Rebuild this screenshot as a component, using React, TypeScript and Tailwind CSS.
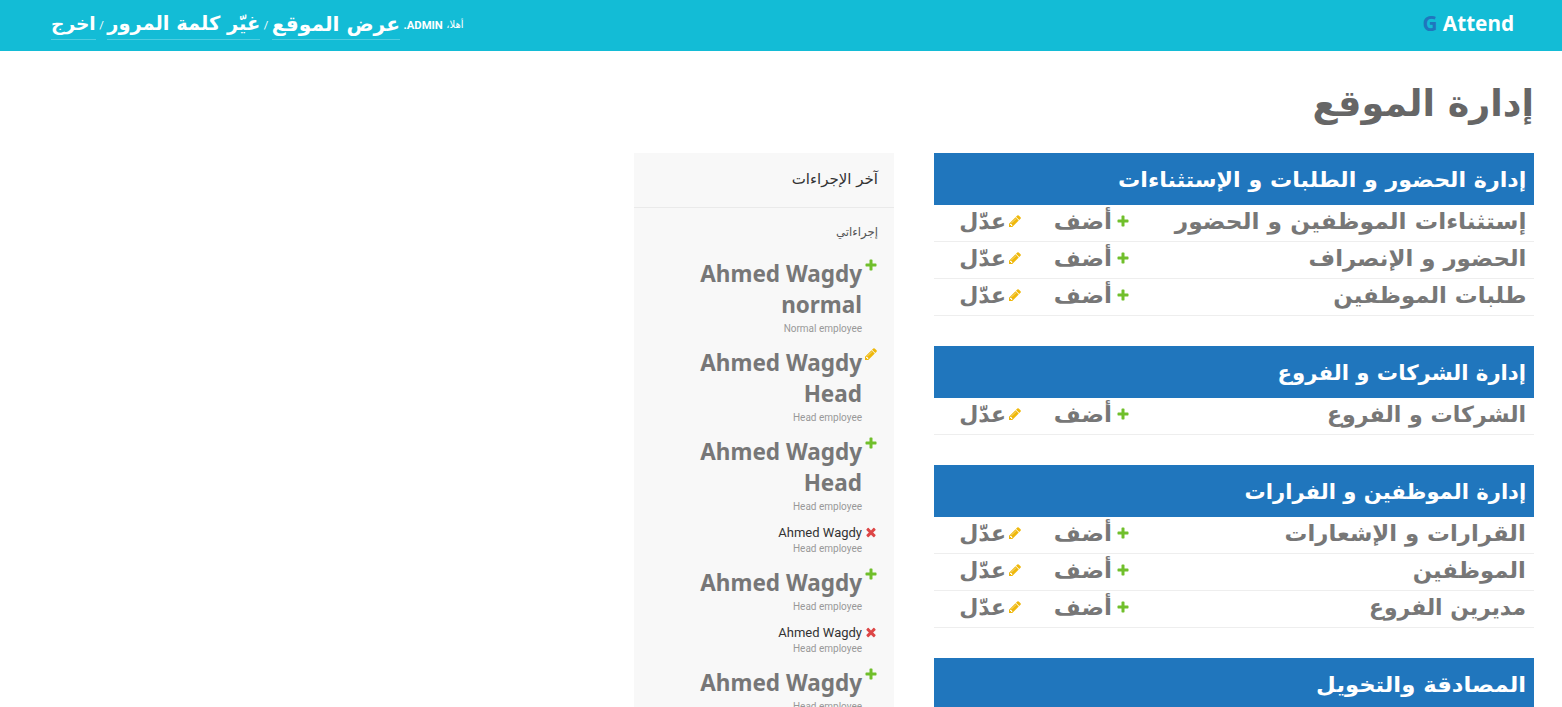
import React from "react";

type Action = "add" | "change" | "delete";

const ICON_PATHS: Record<Action, string> = {
  add: "M1600 796v192q0 40-28 68t-68 28h-416v416q0 40-28 68t-68 28h-192q-40 0-68-28t-28-68v-416h-416q-40 0-68-28t-28-68v-192q0-40 28-68t68-28h416v-416q0-40 28-68t68-28h192q40 0 68 28t28 68v416h416q40 0 68 28t28 68z",
  change:
    "M491 1536l91-91-235-235-91 91v107h128v128h107zm523-928q0-22-22-22-10 0-17 7l-542 542q-7 7-7 17 0 22 22 22 10 0 17-7l542-542q7-7 7-17zm-54-192l416 416-832 832h-416v-416zm683 96q0 53-37 90l-166 166-416-416 166-165q36-38 90-38 53 0 91 38l235 234q37 39 37 91z",
  delete:
    "M1490 1322q0 40-28 68l-136 136q-28 28-68 28t-68-28l-294-294-294 294q-28 28-68 28t-68-28l-136-136q-28-28-28-68t28-68l294-294-294-294q-28-28-28-68t28-68l136-136q28-28 68-28t68 28l294 294 294-294q28-28 68-28t68 28l136 136q28 28 28 68t-28 68l-294 294 294 294q28 28 28 68z",
};

const ICON_COLORS: Record<Action, string> = {
  add: "fill-[#70bf2b]",
  change: "fill-[#efb80b]",
  delete: "fill-[#dd4646]",
};

const ActionIcon: React.FC<{ type: Action }> = ({ type }) => (
  <svg viewBox="0 0 1792 1792" className={`size-[14px] shrink-0 ${ICON_COLORS[type]}`}>
    <path d={ICON_PATHS[type]} />
  </svg>
);

// stretch widens the letterforms of a label
type Label = { text: string; stretch: string };

const modules: { title: Label; models: Label[] }[] = [
  {
    title: { text: "إدارة الحضور و الطلبات و الإستثناءات", stretch: "scale-x-[1.057]" },
    models: [
      { text: "إستثناءات الموظفين و الحضور", stretch: "scale-x-[1.061]" },
      { text: "الحضور و الإنصراف", stretch: "scale-x-[1.04]" },
      { text: "طلبات الموظفين", stretch: "scale-x-[1.036]" },
    ],
  },
  {
    title: { text: "إدارة الشركات و الفروع", stretch: "scale-x-[1.01]" },
    models: [{ text: "الشركات و الفروع", stretch: "scale-x-[1.005]" }],
  },
  {
    title: { text: "إدارة الموظفين و الفرارات", stretch: "scale-x-[1.005]" },
    models: [
      { text: "القرارات و الإشعارات", stretch: "scale-x-[1.036]" },
      { text: "الموظفين", stretch: "scale-x-[1.03]" },
      { text: "مديرين الفروع", stretch: "scale-x-[0.993]" },
    ],
  },
  { title: { text: "المصادقة والتخويل", stretch: "scale-x-[1.082]" }, models: [] },
];

const actions: { type: Action; lines: string[]; kind: string }[] = [
  { type: "add", lines: ["Ahmed Wagdy", "normal"], kind: "Normal employee" },
  { type: "change", lines: ["Ahmed Wagdy", "Head"], kind: "Head employee" },
  { type: "add", lines: ["Ahmed Wagdy", "Head"], kind: "Head employee" },
  { type: "delete", lines: ["Ahmed Wagdy"], kind: "Head employee" },
  { type: "add", lines: ["Ahmed Wagdy"], kind: "Head employee" },
  { type: "delete", lines: ["Ahmed Wagdy"], kind: "Head employee" },
  { type: "add", lines: ["Ahmed Wagdy"], kind: "Head employee" },
];

const Header: React.FC = () => (
  <header className="flex h-[51px] items-start justify-between bg-[#13bcd6] pr-12 pl-[51px] text-white">
    <div dir="ltr" className="font-['Noto_Sans'] text-[20.7px] leading-[47px] font-bold">
      <span className="text-[#2076bd]">G</span> Attend
    </div>
    <div className="flex items-center gap-[3.5px] pt-[9px] text-[11px] whitespace-nowrap">
      <span className="font-['DejaVu_Sans'] text-[10px]">أهلا،</span>
      <span dir="ltr" className="pt-1 font-[Roboto] text-[11.3px] font-bold">.ADMIN</span>
      <a className="border-b border-white/25 font-['DejaVu_Sans'] text-[20.2px] leading-[30px] font-bold">عرض الموقع</a>
      <span className="pt-1">/</span>
      <a className="border-b border-white/25 font-['DejaVu_Sans'] text-[19.4px] leading-[30px] font-bold">غيّر كلمة المرور</a>
      <span className="pt-1">/</span>
      <a className="border-b border-white/25 font-['DejaVu_Sans'] text-[18.6px] leading-[30px] font-bold">اخرج</a>
    </div>
  </header>
);

const Module: React.FC<{ title: Label; models: Label[] }> = ({ title, models }) => (
  <section className="mb-[30px] font-['DejaVu_Sans'] font-bold whitespace-nowrap">
    <h2 className="flex h-[52px] items-center bg-[#2076bd] px-2 pt-[3px] text-[21px] text-white">
      <span className={`origin-right ${title.stretch}`}>{title.text}</span>
    </h2>
    {models.map(({ text, stretch }) => (
      <div key={text} className="flex h-[37px] border-b border-[#eee] text-[22px] leading-[34px] text-[#777]">
        <div className="flex-1 pr-2">
          <span className={`inline-block origin-right ${stretch}`}>{text}</span>
        </div>
        <div className="flex w-[108px] gap-1 pr-[7px]">
          <span className="mt-[9px]"><ActionIcon type="add" /></span>
          <span className="origin-right scale-x-[1.06]">أضف</span>
        </div>
        <div className="flex w-[95px] gap-[2px] pr-[7px]">
          <span className="mt-[9px]"><ActionIcon type="change" /></span>
          <span>عدّل</span>
        </div>
      </div>
    ))}
  </section>
);

const RecentActions: React.FC = () => (
  <aside className="h-[680px] w-[260px] bg-[#f8f8f8]">
    <h2 className="h-[55px] border-b border-[#eaeaea] px-4 font-['DejaVu_Sans'] text-[15px] leading-[52px] text-[#333]">
      آخر الإجراءات
    </h2>
    <h3 className="h-[51px] px-4 font-['DejaVu_Sans'] text-[11.7px] leading-[48px] text-[#555]">إجراءاتي</h3>
    <ul className="pr-4">
      {actions.map(({ type, lines, kind }, i) => (
        <li key={i} className="flex gap-[2px] pb-[11px]">
          <span className={type === "delete" ? "-mt-px" : "-mt-[1.5px]"}><ActionIcon type={type} /></span>
          <div dir="ltr" className="flex-1 text-right">
            {lines.map((line) => (
              <div
                key={line}
                className={
                  type === "delete"
                    ? "mb-[2px] font-[Roboto] text-[13px] leading-[13px] text-[#333]"
                    : "mb-[2px] font-['Noto_Sans'] text-[22.5px] leading-[29px] font-bold text-[#777]"
                }>
                {line}
              </div>
            ))}
            <div className="font-[Roboto] text-[10px] leading-4 text-[#999]">{kind}</div>
          </div>
        </li>
      ))}
    </ul>
  </aside>
);

export default function App() {
  return (
    <div dir="rtl" className="h-[707px] overflow-hidden bg-white font-[Roboto,'DejaVu_Sans',sans-serif]">
      <Header />
      <main className="px-7">
        <h1 className="h-[102px] font-['DejaVu_Sans'] text-[36.5px] leading-[106px] font-bold text-[#666]">إدارة الموقع</h1>
        <div className="flex gap-10">
          <div className="w-[600px]">
            {modules.map((m) => (
              <Module key={m.title.text} {...m} />
            ))}
          </div>
          <RecentActions />
        </div>
      </main>
    </div>
  );
}
